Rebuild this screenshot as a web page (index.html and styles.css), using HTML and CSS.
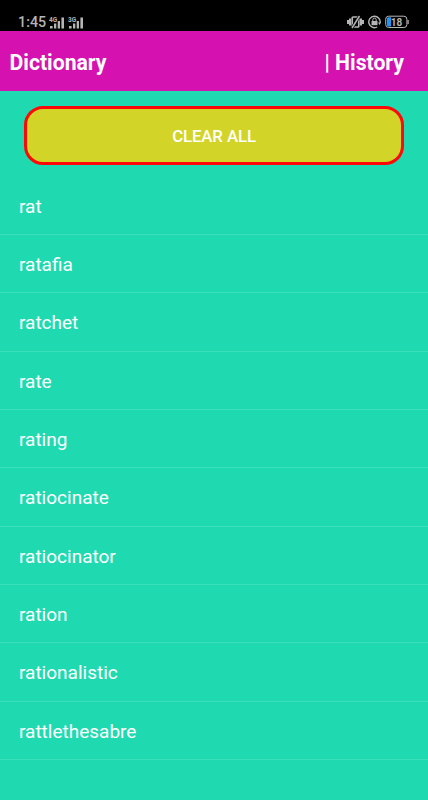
FILE: index.html
```
<!DOCTYPE html>
<html lang="en">
<head>
    <meta charset="utf-8">
    <title>Dictionary</title>
    <link rel="stylesheet" href="styles.css">
</head>
<body>
    <div class="status-bar">
        <span class="time">1:45</span>
        <svg class="signal" width="36" height="14" viewBox="0 0 36 14">
            <text x="0" y="5.5">4G</text>
            <path d="M1 10h2.6v2.5H1zM5 7.5h2.3v5H5zM8.7 5H11v7.5H8.7zM12.4 1.5H15v11h-2.6z"/>
            <text x="19" y="5.5">3G</text>
            <path d="M20 10h2.6v2.5H20zM24 7.5h2.3v5H24zM27.7 5H30v7.5h-2.3zM31.4 1.5H34v11h-2.6z"/>
        </svg>
        <div class="icons">
            <svg width="17" height="14" viewBox="0 0 17 14">
                <path d="M1 5v4M3 3.5v7M14 3.5v7M16 5v4" stroke="#b5b5b5" stroke-width="2"/>
                <rect x="5.2" y="2" width="6.6" height="10" rx="1" fill="none" stroke="#b5b5b5" stroke-width="1.7"/>
                <path d="M5 13L12.5 1" stroke="#000" stroke-width="3"/>
                <path d="M5 13L12.5 1" stroke="#b5b5b5" stroke-width="1.5"/>
            </svg>
            <svg width="13" height="14" viewBox="0 0 13 14">
                <path d="M9.2 12A5.7 5.7 0 1 1 12.1 8" fill="none" stroke="#b5b5b5" stroke-width="1.4"/>
                <path d="M10 7.4h3L11.7 10z" fill="#b5b5b5"/>
                <rect x="3.5" y="6" width="6" height="4.2" fill="#b5b5b5"/>
                <path d="M4.8 6V4.8a1.7 1.7 0 0 1 3.4 0V6" fill="none" stroke="#b5b5b5"/>
            </svg>
            <svg class="battery" width="25" height="14" viewBox="0 0 25 14">
                <rect x=".7" y="1.2" width="21.2" height="11.3" rx="3" fill="none" stroke="#b5b5b5"/>
                <path d="M3.5 2.2H6v9.3H3.5q-1.6 0-1.6-1.6V3.8q0-1.6 1.6-1.6z" fill="#2196f3"/>
                <path d="M23.1 5v4" stroke="#b5b5b5" stroke-width="1.2"/>
                <text x="5.8" y="10.7">18</text>
            </svg>
        </div>
    </div>
    <div class="header">
        <span>Dictionary</span>
        <span>| History</span>
    </div>
    <button class="clear">CLEAR ALL</button>
    <ul class="words">
        <li>rat</li>
        <li>ratafia</li>
        <li>ratchet</li>
        <li>rate</li>
        <li>rating</li>
        <li>ratiocinate</li>
        <li>ratiocinator</li>
        <li>ration</li>
        <li>rationalistic</li>
        <li>rattlethesabre</li>
    </ul>
</body>
</html>
```
FILE: styles.css
```
* {
    box-sizing: border-box;
}
body {
    margin: 0;
    height: 800px;
    overflow: hidden;
    background-color: #1fdab0;
    color: white;
    font-family: Roboto, sans-serif;
}
.status-bar {
    display: flex;
    align-items: center;
    height: 31px;
    padding: 13px 18.5px 0 18px;
    background-color: #000;
    color: #b5b5b5;
}
.time {
    width: 31px;
    font-size: 14.3px;
    font-weight: 500;
    line-height: 18px;
}
.signal {
    margin-top: 1px;
    fill: #b5b5b5;
    font-size: 6.5px;
    font-weight: bold;
}
.icons {
    display: flex;
    gap: 4px;
    margin-left: auto;
}
.battery text {
    fill: #b5b5b5;
    font-size: 10px;
    font-weight: bold;
}
.header {
    display: flex;
    justify-content: space-between;
    align-items: center;
    height: 60px;
    padding: 3px 24px 0 9.5px;
    background-color: #d512b0;
    font-size: 21.2px;
    font-weight: bold;
}
.clear {
    display: block;
    width: 380px;
    height: 59px;
    margin: 15px 0 0 24px;
    padding: 0;
    border: 3px solid #ff0808;
    border-radius: 19px;
    background-color: #d2d427;
    color: white;
    font-family: inherit;
    font-size: 16.8px;
    font-weight: 500;
    letter-spacing: -0.1px;
}
.words {
    margin: 11.6px 0 0;
    padding: 0;
    list-style: none;
}
.words li {
    height: 58.33px;
    padding-left: 19px;
    border-bottom: 1px solid #3be0ba;
    font-size: 19px;
    line-height: 59px;
}
```
